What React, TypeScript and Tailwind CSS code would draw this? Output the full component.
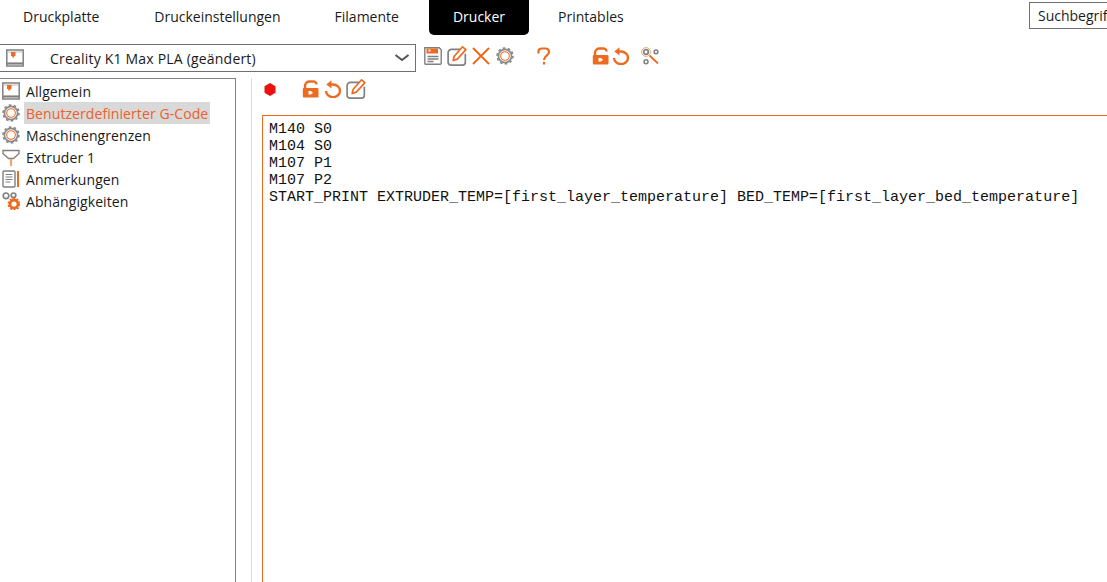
import type { ReactNode } from 'react';

const ORANGE = '#ed6b21';
const GRAY = '#808080';

function Icon({ size = 18, children }: { size?: number; children: ReactNode }) {
  return (
    <svg width={size} height={size} viewBox="0 0 18 18" fill="none" className="shrink-0">
      {children}
    </svg>
  );
}

function WindowIcon() {
  return (
    <Icon>
      <rect x="0.800" y="1" width="16.400" height="16" stroke={GRAY} strokeWidth="1.500" />
      <path d="M1 14.500h16" stroke={GRAY} strokeWidth="2.200" />
      <path d="M1.500 3h15" stroke="#bdbdbd" strokeWidth="1" />
      <rect x="5" y="3" width="4.500" height="4" fill={ORANGE} />
      <rect x="6.300" y="7" width="2" height="1.500" fill={ORANGE} />
    </Icon>
  );
}

function GearIcon() {
  return (
    <Icon>
      <circle cx="9" cy="9" r="6.600" stroke="#8a8a8a" strokeWidth="1.700" />
      <circle cx="9" cy="9" r="7.900" stroke="#8a8a8a" strokeWidth="1.700" strokeDasharray="2.600 2.360" />
      <circle cx="9" cy="9" r="4.300" stroke={ORANGE} strokeWidth="1.100" fill="#fff" />
    </Icon>
  );
}

function ExtruderIcon() {
  return (
    <Icon>
      <path d="M1 2.500h16v3l-5.500 5h-5L1 5.500z" stroke={GRAY} strokeWidth="1.400" />
      <path d="M9 11V18" stroke="#f2a477" strokeWidth="2.200" />
    </Icon>
  );
}

function NotesIcon() {
  return (
    <Icon>
      <rect x="1" y="1" width="12" height="16" rx="1" stroke={GRAY} strokeWidth="1.400" />
      <path d="M3.500 4.500h7M3.500 7h7M3.500 9.500h7M3.500 12h5" stroke={GRAY} strokeWidth="1.200" />
      <path d="M16 1v16" stroke={ORANGE} strokeWidth="2" />
    </Icon>
  );
}

function DependenciesIcon() {
  return (
    <Icon>
      <circle cx="4" cy="3.800" r="2.800" stroke={GRAY} strokeWidth="1.700" />
      <circle cx="11.500" cy="3.300" r="2.300" stroke={GRAY} strokeWidth="1.700" />
      <circle cx="12" cy="12" r="4" stroke={ORANGE} strokeWidth="2.800" />
      <circle cx="12" cy="12" r="5.700" stroke={ORANGE} strokeWidth="1.600" strokeDasharray="2 1.600" />
    </Icon>
  );
}

function SaveIcon() {
  return (
    <Icon>
      <path d="M0.800 0.800h14.400l2 2v13.400a1 1 0 0 1-1 1H1.800a1 1 0 0 1-1-1z" stroke={GRAY} strokeWidth="1.400" />
      <rect x="2.500" y="1.500" width="11.500" height="5" fill={ORANGE} />
      <rect x="4.500" y="2.500" width="2" height="2" fill="#fff" />
      <path d="M3.500 9.500h11M3.500 12h11M3.500 14.500h6" stroke={GRAY} strokeWidth="1.300" />
    </Icon>
  );
}

function EditIcon() {
  return (
    <Icon size={20}>
      <path d="M12.500 3H4a3 3 0 0 0-3 3v8.700a2.500 2.500 0 0 0 2.500 2.500h10.500a2.500 2.500 0 0 0 2.500-2.500V7" stroke={GRAY} strokeWidth="1.500" />
      <path d="M5.500 13l1-3.800 7.500-8.500 3 2.600-7.700 8.500z" stroke={ORANGE} strokeWidth="1.500" fill="#fff" strokeLinejoin="round" />
    </Icon>
  );
}

function CloseIcon() {
  return (
    <Icon>
      <path d="M1 1l16 16M17 1L1 17" stroke={ORANGE} strokeWidth="2" />
    </Icon>
  );
}

function HelpIcon() {
  return (
    <Icon>
      <path d="M3.500 6.500V4.500C3.500 2.800 5 1.500 7 1.500h3.500c2 0 3.500 1.500 3.500 3.500 0 3.500-5 3.800-5 8" stroke={ORANGE} strokeWidth="2.200" />
      <path d="M9 14.800v2.700" stroke={ORANGE} strokeWidth="2.200" />
    </Icon>
  );
}

function UnlockIcon() {
  return (
    <Icon>
      <path d="M3 8.500V5.500a4.500 4.500 0 0 1 4.500-4h3.500a3 3 0 0 1 3.500 3" stroke={ORANGE} strokeWidth="2.400" />
      <rect x="0.800" y="8" width="15.700" height="9.500" rx="1" fill={ORANGE} />
      <path d="M6.500 11h2.500l2 1.700-2 1.700H6.500z" fill="#fff" />
    </Icon>
  );
}

function UndoIcon() {
  return (
    <Icon>
      <path d="M6 4.500h3a7 6.300 0 1 1-7 6.500" stroke={ORANGE} strokeWidth="2.400" />
      <path d="M7.500 0.200v8.300L2.300 4.500z" fill={ORANGE} />
    </Icon>
  );
}

function WrenchSearchIcon() {
  return (
    <Icon>
      <circle cx="5" cy="5" r="2.300" stroke={GRAY} strokeWidth="1.700" />
      <circle cx="5" cy="5" r="4.400" stroke="#f2a477" strokeWidth="1" />
      <circle cx="15" cy="4.800" r="1.900" stroke={GRAY} strokeWidth="1.500" />
      <circle cx="5" cy="14.800" r="2" stroke={GRAY} strokeWidth="1.500" />
      <path d="M8.500 8.500l8.500 8" stroke={ORANGE} strokeWidth="1.800" />
    </Icon>
  );
}

function Tab({ label, active, className = '' }: { label: string; active?: boolean; className?: string }) {
  return (
    <div
      className={`h-[35px] px-[24px] pb-[2px] flex items-center rounded-b-[5px] ${
        active ? 'bg-black text-white' : 'text-[#1a1a1a]'
      } ${className}`}
    >
      {label}
    </div>
  );
}

const treeItems: { label: string; icon: ReactNode; selected?: boolean }[] = [
  { label: 'Allgemein', icon: <WindowIcon /> },
  { label: 'Benutzerdefinierter G-Code', icon: <GearIcon />, selected: true },
  { label: 'Maschinengrenzen', icon: <GearIcon /> },
  { label: 'Extruder 1', icon: <ExtruderIcon /> },
  { label: 'Anmerkungen', icon: <NotesIcon /> },
  { label: 'Abhängigkeiten', icon: <DependenciesIcon /> },
];

const gcode = [
  'M140 S0',
  'M104 S0',
  'M107 P1',
  'M107 P2',
  'START_PRINT EXTRUDER_TEMP=[first_layer_temperature] BED_TEMP=[first_layer_bed_temperature]',
];

export default function App() {
  return (
    <div className="w-[1107px] h-[582px] overflow-hidden bg-white text-[14px] text-[#1a1a1a] font-['Open_Sans',sans-serif] flex flex-col">
      {/* tabs */}
      <div className="h-[44px] flex items-start justify-between shrink-0">
        <div className="flex gap-[6px] ml-[-1px]">
          <Tab label="Druckplatte" className="mr-[1px]" />
          <Tab label="Druckeinstellungen" />
          <Tab label="Filamente" />
          <Tab label="Drucker" active />
          <Tab label="Printables" className="ml-[-1px]" />
        </div>
        <div className="mt-[2px] w-[100px] mr-[-22px] h-[27px] border border-[#707070] pl-[8px] flex items-center overflow-hidden whitespace-nowrap">
          Suchbegriff
        </div>
      </div>

      {/* preset row */}
      <div className="h-[34px] flex items-start shrink-0">
        <div className="w-[417px] ml-[-1px] h-[28px] border border-[#707070] flex items-center pl-[6px] pr-[5px]">
          <WindowIcon />
          <span className="ml-[26px] grow tracking-[0.2px]">Creality K1 Max PLA (geändert)</span>
          <svg width="16" height="8" viewBox="0 0 16 8" fill="none">
            <path d="M1.500 1l6.500 5 6.500-5" stroke="#555" strokeWidth="2" />
          </svg>
        </div>
        <div className="flex items-center mt-[1px] ml-[8px] h-[22px]">
          <SaveIcon />
          <div className="w-[5px]" />
          <EditIcon />
          <div className="w-[5px]" />
          <CloseIcon />
          <div className="w-[6px]" />
          <GearIcon />
          <div className="w-[21px]" />
          <HelpIcon />
          <div className="w-[39px]" />
          <UnlockIcon />
          <div className="w-[2px]" />
          <UndoIcon />
          <div className="w-[11px]" />
          <WrenchSearchIcon />
        </div>
      </div>

      <div className="flex grow min-h-0">
        {/* tree */}
        <div className="w-[236px] border-t border-r border-[#808080] shrink-0 pt-[1px] pl-[2px]">
          {treeItems.map((item) => (
            <div key={item.label} className="h-[22px] flex items-center">
              {item.icon}
              <span
                className={`ml-[4px] h-[22px] px-[2px] flex items-center tracking-[0.08px] ${
                  item.selected ? 'bg-[#d9d9d9] text-[#ed5f2a]' : ''
                }`}
              >
                {item.label}
              </span>
            </div>
          ))}
        </div>

        {/* page */}
        <div className="ml-[15px] border-l border-[#dcdcdc] grow flex flex-col pl-[10px]">
          <div className="h-[37px] flex items-start shrink-0 pt-[1px]">
            <div className="flex items-center h-[20px]">
              <svg width="12" height="13" viewBox="0 0 12 13" className="ml-[2px] shrink-0">
                <path d="M6 0l5.500 3.200v6.600L6 13 .5 9.800V3.200z" fill="#ee0f0f" />
              </svg>
              <div className="ml-[26px] flex items-center gap-[4px]">
                <UnlockIcon />
                <UndoIcon />
                <EditIcon />
              </div>
            </div>
          </div>
          <div className="grow border-t border-l border-[#ed6b21] pl-[6px] pt-[5px] font-['Liberation_Mono',monospace] text-[15px] leading-[17px] text-[#111] whitespace-pre">
            {gcode.map((line) => (
              <div key={line}>{line}</div>
            ))}
          </div>
        </div>
      </div>
    </div>
  );
}
